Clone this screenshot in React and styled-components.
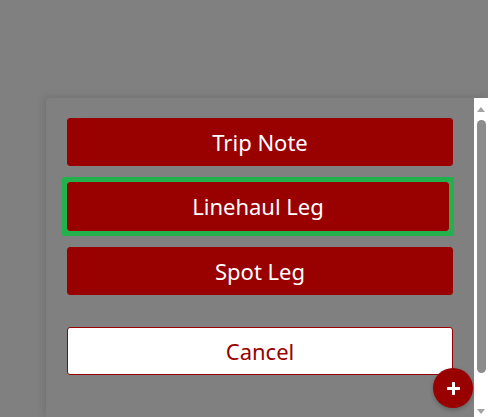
import React from 'react';
import styled, { createGlobalStyle } from 'styled-components';

const GlobalStyle = createGlobalStyle`
  html, body {
    margin: 0;
    padding: 0;
    height: 100%;
    background: #808080;
    overflow: hidden;
  }
  #root {
    height: 100%;
  }
`;

const Screen = styled.div`
  height: 100%;
  box-sizing: border-box;
  padding: 98px 0 0 46px;
  display: flex;
  font-family: 'Noto Sans', 'Open Sans', sans-serif;
`;

const Sheet = styled.div`
  position: relative;
  flex: 1;
  display: flex;
  background: #808080;
  border-top-left-radius: 4px;
  box-shadow: -2px -1px 8px rgba(0, 0, 0, 0.12);
`;

const Content = styled.div`
  flex: 1;
  display: flex;
  flex-direction: column;
  align-items: flex-start;
  gap: 16px;
  padding: 20px 21px 0 21px;
`;

const ActionButton = styled.button`
  position: relative;
  box-sizing: border-box;
  width: ${(p) => (p.$focused ? 'calc(100% - 4px)' : '100%')};
  height: ${(p) => (p.$focused ? '49px' : '48px')};
  margin-top: ${(p) => (p.$spaced ? '16px' : '0')};
  border: 1px solid #990000;
  border-radius: 3px;
  background: ${(p) => (p.$outline ? '#ffffff' : '#990000')};
  color: ${(p) => (p.$outline ? '#990000' : '#ffffff')};
  outline: none;
  font-family: inherit;
  font-size: 22px;
  line-height: 1;
  padding: 0 0 1px;
  cursor: pointer;

  &::after {
    content: '';
    display: ${(p) => (p.$focused ? 'block' : 'none')};
    position: absolute;
    inset: -6px;
    border: 5px solid #22b14c;
    border-radius: 2px;
    pointer-events: none;
  }
`;

const Scrollbar = styled.div`
  width: 14px;
  background: #ffffff;
  display: flex;
  flex-direction: column;
  align-items: center;
`;

const Arrow = styled.div`
  width: 0;
  height: 0;
  border-left: 4.5px solid transparent;
  border-right: 4.5px solid transparent;
  ${(p) =>
    p.$down
      ? 'border-top: 5px solid #a3a3a3; margin: 36px 0 0;'
      : 'border-bottom: 5px solid #a3a3a3; margin: 9px 0 8px;'}
`;

const Thumb = styled.div`
  width: 9px;
  height: 253px;
  border-radius: 5px;
  background: #8c8c8c;
`;

const Fab = styled.button`
  position: absolute;
  left: 387px;
  top: 270px;
  width: 40px;
  height: 40px;
  border-radius: 50%;
  border: none;
  background: #990000;
  box-shadow: 0 2px 4px rgba(0, 0, 0, 0.25);
  display: flex;
  align-items: center;
  justify-content: center;
  padding: 0;
  cursor: pointer;
`;

const PlusIcon = () => (
  <svg width="13" height="13" viewBox="0 0 13 13">
    <path d="M6.5 1v11M1 6.5h11" stroke="#ffffff" strokeWidth="3" strokeLinecap="round" />
  </svg>
);

export default function App() {
  return (
    <>
      <GlobalStyle />
      <Screen>
        <Sheet>
          <Content>
            <ActionButton>Trip Note</ActionButton>
            <ActionButton $focused>Linehaul Leg</ActionButton>
            <ActionButton>Spot Leg</ActionButton>
            <ActionButton $outline $spaced>Cancel</ActionButton>
          </Content>
          <Scrollbar>
            <Arrow />
            <Thumb />
            <Arrow $down />
          </Scrollbar>
          <Fab aria-label="Add">
            <PlusIcon />
          </Fab>
        </Sheet>
      </Screen>
    </>
  );
}
